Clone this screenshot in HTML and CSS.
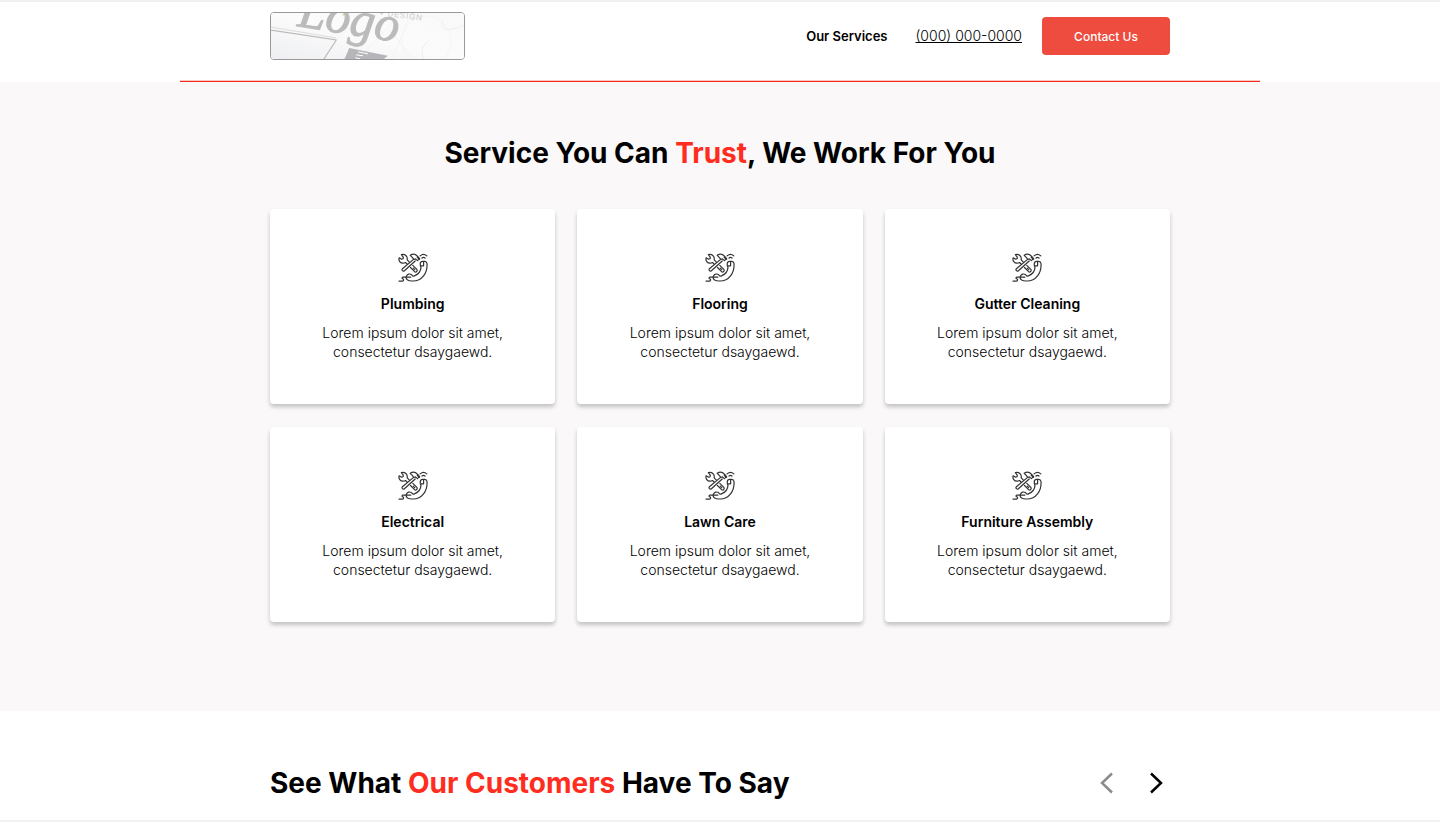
FILE: index.html
```
<!DOCTYPE html>
<html lang="en">
<head>
    <meta charset="UTF-8">
    <meta name="viewport" content="width=device-width, initial-scale=1.0">
    <title>Home Services</title>
    <link rel="stylesheet" href="styles.css">
</head>
<body>
    <!-- shared icon for the service cards -->
    <svg class="sprite" aria-hidden="true">
        <symbol id="tools" viewBox="0 0 30 30">
            <g fill="none" stroke="#333" stroke-width="1.2" stroke-linecap="round" stroke-linejoin="round">
                <!-- wrench -->
                <path d="M3.400 1.600l1.800 2.600c.4 1.200-.3 2-1.600 2L1.200 4.800C.2 7.700 2.400 10.200 5 10.200c1 0 1.800-.2 2.500-.7l1.600 1.500M3.400 1.600C6.900.6 9.900 3.400 9.200 6.900l2.200 2.200"/>
                <path d="M14.800 12.400l4.100 4c1 1.500-.8 3.300-2.300 2.300l-4.100-4.200M15.300 15.200l1.500 1.500"/>
                <!-- hammer -->
                <path d="M12.200 2.300c2.600-1.700 5.500-1 7.200.9l2 2.700-2 1.700-1.900-1.700-1.700.6-1.300-1.800z"/>
                <path d="M19.500 4.200l1.900 1.800" stroke-width="1.800"/>
                <path d="M15.600 6.400L4.400 15.700c-1.200 1.300.6 3.200 2 2.100L17.200 8"/>
                <!-- phone -->
                <path d="M22.300 12.800v-2.400c.1-1.400 1-2.100 2.300-2.100h2.200c1.400 0 2 .8 2.200 2.200.7 9.500-5.200 17.500-14 17.500-2.500.1-4-.1-5.400-.9-1.500-1.100-1.800-2.700-1-4.200.9-1.800 3-2.500 4.800-1.300l1.100 1.100c.6.500 1.200.5 1.900.2 4.300-1.700 6.400-4.500 6.600-8.800z"/>
                <path d="M25.600 9v3.800h-2.400M4.600 24.200h8.200M4.600 24.200c-1 .5-.6 1.700.6 1.800.7.600.5 2-.6 2.100H1"/>
                <path d="M22.100 2.900c2-1.800 4.800-1.800 6.700 0M24 5c.9-.8 2.100-.8 3 0"/>
            </g>
        </symbol>
    </svg>

    <header class="header">
        <div class="header-inner">
            <a class="logo" href="#" aria-label="Home">
                <svg viewBox="0 0 195 48" preserveAspectRatio="xMidYMid slice" aria-hidden="true">
                    <defs>
                        <linearGradient id="paper" x1="0" y1="1" x2="1" y2="0">
                            <stop offset="0" stop-color="#eeeff2"/>
                            <stop offset=".5" stop-color="#fbfbfb"/>
                            <stop offset="1" stop-color="#f9f9f9"/>
                        </linearGradient>
                    </defs>
                    <rect width="195" height="48" fill="url(#paper)"/>
                    <path d="M0 18l66 10-13 20" fill="none" stroke="#bbb" stroke-width="1.200"/>
                    <path d="M0 15l66 11" fill="none" stroke="#ddd"/>
                    <path d="M66 28L96 0M88 48l44-48M120 18l24 30M142 0l-20 48" fill="none" stroke="#f3f3f3"/>
                    <circle cx="157" cy="29" r="25" fill="none" stroke="#f5f5f5"/>
                    <path d="M159 29c-8 7-8 13-3 20M173 8c-1 7 1 14 22 5" fill="none" stroke="#eee"/>
                    <path d="M79 36l39 8-5 4H74z" fill="#b6b6ba"/>
                    <path d="M88 40l10 2M86 43l7 1M85 46l5 1" stroke="#fff"/>
                    <path d="M72 3l6-3" stroke="#e9dfb8" stroke-width="2"/>
                    <text class="logo-word" transform="translate(26 14) rotate(9)">Logo</text>
                    <text class="logo-sub" transform="translate(109 3) rotate(7)">• DESIGN</text>
                </svg>
            </a>
            <nav class="nav">
                <a class="nav-link" href="#services">Our Services</a>
                <a class="nav-phone" href="tel:0000000000">(000) 000-0000</a>
                <button class="contact" type="button">Contact Us</button>
            </nav>
        </div>
    </header>

    <main>
        <section class="services" id="services">
            <h2>Service You Can <span class="accent">Trust</span>, We Work For You</h2>
            <div class="cards">
                <div class="card">
                    <svg class="icon" aria-hidden="true"><use href="#tools"/></svg>
                    <h3>Plumbing</h3>
                    <p>Lorem ipsum dolor sit amet, consectetur dsaygaewd.</p>
                </div>
                <div class="card">
                    <svg class="icon" aria-hidden="true"><use href="#tools"/></svg>
                    <h3>Flooring</h3>
                    <p>Lorem ipsum dolor sit amet, consectetur dsaygaewd.</p>
                </div>
                <div class="card">
                    <svg class="icon" aria-hidden="true"><use href="#tools"/></svg>
                    <h3>Gutter Cleaning</h3>
                    <p>Lorem ipsum dolor sit amet, consectetur dsaygaewd.</p>
                </div>
                <div class="card">
                    <svg class="icon" aria-hidden="true"><use href="#tools"/></svg>
                    <h3>Electrical</h3>
                    <p>Lorem ipsum dolor sit amet, consectetur dsaygaewd.</p>
                </div>
                <div class="card">
                    <svg class="icon" aria-hidden="true"><use href="#tools"/></svg>
                    <h3>Lawn Care</h3>
                    <p>Lorem ipsum dolor sit amet, consectetur dsaygaewd.</p>
                </div>
                <div class="card">
                    <svg class="icon" aria-hidden="true"><use href="#tools"/></svg>
                    <h3>Furniture Assembly</h3>
                    <p>Lorem ipsum dolor sit amet, consectetur dsaygaewd.</p>
                </div>
            </div>
        </section>

        <section class="reviews">
            <div class="reviews-head">
                <h2>See What <span class="accent">Our Customers</span> Have To Say</h2>
                <div class="arrows">
                    <button class="arrow prev" type="button" aria-label="Previous">
                        <svg viewBox="0 0 14 22" aria-hidden="true"><path d="M12 1.500L2 11l10 9.500"/></svg>
                    </button>
                    <button class="arrow" type="button" aria-label="Next">
                        <svg viewBox="0 0 14 22" aria-hidden="true"><path d="M2 1.500L12 11 2 20.500"/></svg>
                    </button>
                </div>
            </div>
        </section>
    </main>
</body>
</html>
```

FILE: styles.css
```
* {
    box-sizing: border-box;
}

body {
    margin: 0;
    font-family: Inter, "Liberation Sans", sans-serif;
    font-size: 14px;
    color: #000;
    background-color: #fff;
}

h2, h3, p {
    margin: 0;
}

h2 {
    font-size: 28px;
    font-weight: 700;
    line-height: 36px;
}

.sprite {
    display: none;
}

.accent {
    color: #ff2d20;
}

.header {
    border-top: 2px solid #f0f0f0;
}

.header-inner {
    max-width: 1080px;
    margin: 0 auto;
    padding: 10px 90px 21px;
    display: flex;
    align-items: flex-start;
    justify-content: space-between;
    border-bottom: 1px solid #f02d20;
    box-shadow: inset 0 -1px 0 #fcc8c0;
}

.logo {
    width: 195px;
    height: 48px;
    border: 1px solid #999;
    border-radius: 4px;
    overflow: hidden;
}

.logo svg {
    display: block;
    width: 100%;
    height: 100%;
}

.logo-word {
    font-family: "Liberation Serif", serif;
    font-size: 50px;
    font-style: italic;
    fill: #bbb;
    stroke: #bbb;
}

.logo-sub {
    font-size: 8px;
    letter-spacing: 1px;
    fill: #ccc;
}

.nav {
    display: flex;
    align-items: center;
    padding-top: 5px;
}

.nav-link {
    font-size: 13px;
    font-weight: 600;
    line-height: 20px;
    color: #000;
    text-decoration: none;
    margin-right: 28px;
}

.nav-phone {
    font-weight: 300;
    line-height: 20px;
    color: #000;
    margin-right: 20px;
}

.contact {
    width: 128px;
    height: 38px;
    border: none;
    border-radius: 4px;
    background-color: #ed4c3f;
    color: #fff;
    font-family: inherit;
    font-size: 12px;
    font-weight: 500;
    cursor: pointer;
}

.services {
    background-color: #faf8f9;
    padding: 53px 20px 89px;
}

.services h2 {
    text-align: center;
}

.cards {
    max-width: 900px;
    margin: 38px auto 0;
    display: grid;
    grid-template-columns: repeat(3, 1fr);
    gap: 23px 22px;
}

.card {
    padding: 44px 40px 42px;
    text-align: center;
    background-color: #fff;
    border-radius: 4px;
    box-shadow: 0 3px 4px rgba(0, 0, 0, 0.22);
}

.icon {
    display: block;
    width: 30px;
    height: 30px;
    margin: 0 auto 11px;
}

.card h3 {
    font-size: 14px;
    font-weight: 600;
    line-height: 20px;
    margin-bottom: 9px;
}

.card p {
    font-weight: 300;
    line-height: 19px;
    margin-bottom: 1px;
}

.reviews {
    padding: 54px 20px 19px;
    border-bottom: 2px solid #f1f1f4;
}

.reviews-head {
    max-width: 900px;
    margin: 0 auto;
    display: flex;
    align-items: center;
    justify-content: space-between;
}

.arrows {
    display: flex;
    gap: 20px;
}

.arrow {
    width: 29px;
    height: 30px;
    padding: 0;
    border: none;
    background: none;
    cursor: pointer;
}

.arrow svg {
    display: block;
    width: 14px;
    height: 22px;
    margin: 0 auto;
    fill: none;
    stroke: #000;
    stroke-width: 2.5;
}

.prev {
    opacity: 0.45;
}
```
